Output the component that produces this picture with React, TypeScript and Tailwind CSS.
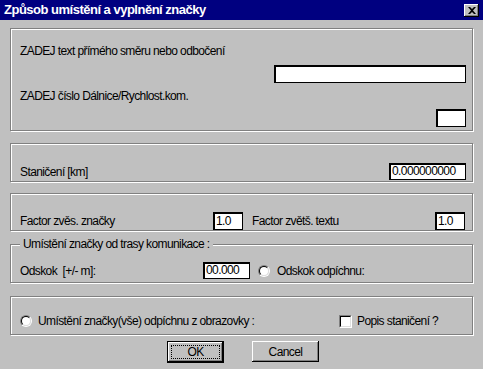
import type { ReactNode } from 'react';

/**
 * Dialog: Způsob umístění a vyplnění značky (Win9x styl)
 */

const FONT = '"Liberation Sans", Arial, sans-serif';

function Group({ h, mt, children }: { h: string; mt: string; children: ReactNode }) {
  return (
    <div
      className={`ml-[10px] w-[463px] border border-[#808080] shadow-[inset_1px_1px_0_#fff,1px_1px_0_#fff] ${h} ${mt}`}
    >
      {children}
    </div>
  );
}

function Edit({ w, h = 'h-[18px]', value }: { w: string; h?: string; value?: string }) {
  return (
    <div
      className={`${w} ${h} bg-white border border-black shadow-[inset_1px_1px_0_#000] pl-[2px] text-[12px] leading-[15px] flex items-center`}
    >
      {value}
    </div>
  );
}

function Radio() {
  return (
    <div className="w-[12px] h-[12px] rounded-full border border-t-[#808080] border-l-[#808080] border-b-white border-r-white shrink-0">
      <div className="w-full h-full rounded-full bg-white border border-t-black border-l-black border-b-[#dfdfdf] border-r-[#dfdfdf]" />
    </div>
  );
}

function Check() {
  return (
    <div className="w-[13px] h-[13px] border border-t-[#808080] border-l-[#808080] border-b-white border-r-white shrink-0">
      <div className="w-full h-full bg-white border border-t-black border-l-black border-b-[#dfdfdf] border-r-[#dfdfdf]" />
    </div>
  );
}

export default function App() {
  return (
    <div
      className="w-[483px] h-[369px] bg-[#c0c0c0] overflow-hidden text-black text-[12px] leading-[16px] tracking-[-0.6px]"
      style={{ fontFamily: FONT }}
    >
      {/* titulek */}
      <div className="h-[20px] bg-[#000080] flex items-center justify-between pl-[4px] pr-[4px]">
        <span className="text-white font-bold text-[13px] leading-[14px] tracking-[-0.5px]">Způsob umístění a vyplnění značky</span>
        <div className="w-[15px] h-[13px] bg-[#c0c0c0] shadow-[inset_-1px_-1px_0_#000,inset_1px_1px_0_#fff,inset_-2px_-2px_0_#808080] flex items-center justify-center">
          <svg width="8" height="7" viewBox="0 0 8 7">
            <path d="M0 0h2l2 2 2-2h2L5 3.5 8 7H6L4 5 2 7H0l3-3.5z" fill="#000" />
          </svg>
        </div>
      </div>

      {/* ZADEJ */}
      <Group h="h-[103px]" mt="mt-[8px]">
        <div className="flex flex-col pl-[9px] pr-[6px]">
          <div className="mt-[14px]">ZADEJ text přímého směru nebo odbočení</div>
          <div className="mt-[6px] flex justify-end">
            <Edit w="w-[192px]" />
          </div>
          <div className="mt-[5px]">ZADEJ číslo Dálnice/Rychlost.kom.</div>
          <div className="mt-[5px] flex justify-end">
            <Edit w="w-[30px]" />
          </div>
        </div>
      </Group>

      {/* Staničení */}
      <Group h="h-[39px]" mt="mt-[12px]">
        <div className="mt-[19px] pl-[9px] pr-[6px] flex items-center justify-between">
          <span>Staničení [km]</span>
          <Edit w="w-[77px]" h="h-[17px]" value="0.000000000" />
        </div>
      </Group>

      {/* Faktory */}
      <Group h="h-[38px]" mt="mt-[11px]">
        <div className="mt-[18px] pl-[9px] pr-[7px] flex items-center">
          <span className="w-[193px]">Factor zvěs. značky</span>
          <Edit w="w-[30px]" value="1.0" />
          <span className="ml-[9px] flex-1">Factor zvětš. textu</span>
          <Edit w="w-[30px]" value="1.0" />
        </div>
      </Group>

      {/* Odskok */}
      <div className="mt-[13px] relative">
        <Group h="h-[39px]" mt="mt-0">
          <div className="mt-[17px] pl-[9px] flex items-center">
            <span className="w-[183px]">Odskok &nbsp;[+/- m]:</span>
            <Edit w="w-[47px]" h="h-[17px]" value="00.000" />
            <div className="ml-[8px]">
              <Radio />
            </div>
            <span className="ml-[7px]">Odskok odpíchnu:</span>
          </div>
        </Group>
        <span className="absolute left-[20px] top-[-8px] px-[3px] bg-[#c0c0c0]">
          Umístění značky od trasy komunikace :
        </span>
      </div>

      {/* odpíchnutí */}
      <Group h="h-[39px]" mt="mt-[13px]">
        <div className="mt-[16px] pl-[9px] flex items-center">
          <Radio />
          <span className="ml-[6px] w-[301px]">Umístění značky(vše) odpíchnu z obrazovky :</span>
          <Check />
          <span className="ml-[5px]">Popis staničení ?</span>
        </div>
      </Group>

      {/* tlačítka */}
      <div className="mt-[6px] flex pl-[167px] gap-[28px]">
        <div className="w-[57px] h-[22px] border border-black bg-[#c0c0c0] shadow-[inset_-1px_-1px_0_#000,inset_1px_1px_0_#fff,inset_-2px_-2px_0_#808080] p-[3px]">
          <div className="w-full h-full border border-dotted border-black flex items-center justify-center leading-[12px]">
            OK
          </div>
        </div>
        <div className="w-[67px] h-[21px] bg-[#c0c0c0] shadow-[inset_-1px_-1px_0_#000,inset_1px_1px_0_#fff,inset_-2px_-2px_0_#808080] flex items-center justify-center">
          Cancel
        </div>
      </div>
    </div>
  );
}
